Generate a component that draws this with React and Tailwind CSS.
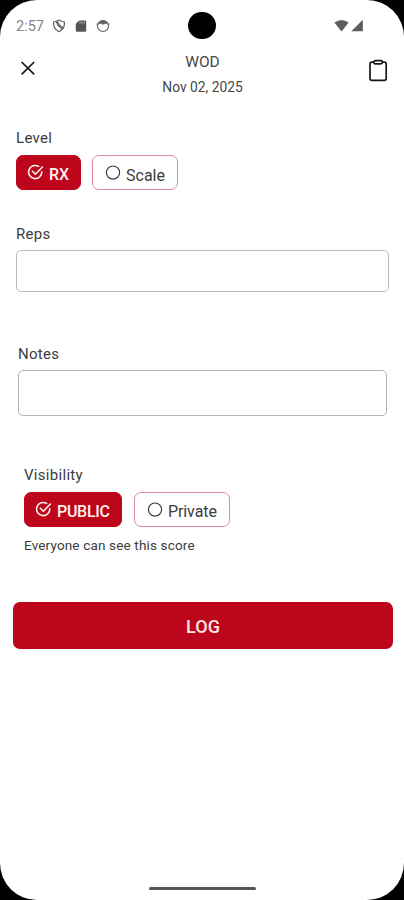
const CheckCircle = () => (
  <svg className="w-[17px] h-[17px] shrink-0" viewBox="0 0 17 17" fill="none" stroke="currentColor" strokeWidth="1.6" strokeLinecap="round" strokeLinejoin="round">
    <path d="M14.8 7.8 A6.6 6.6 0 1 1 11.6 2.4" />
    <path d="M5.4 7.2 L8.4 10.2 L15.4 3" />
  </svg>
);

const EmptyCircle = () => (
  <svg className="w-[17px] h-[17px] shrink-0" viewBox="0 0 17 17" fill="none" stroke="currentColor" strokeWidth="1.2">
    <circle cx="9" cy="8.6" r="6.6" />
  </svg>
);

const Choice = ({ label, active, className, textClass }) => (
  <button
    type="button"
    className={`flex h-[35px] items-start rounded-[7px] border pt-[8px] ${active ? 'border-[#bd051c] bg-[#bd051c] text-[#fff0ee]' : 'border-[#dc8f98] bg-white text-[#3c3c3c]'} ${className}`}
  >
    {active ? <CheckCircle /> : <EmptyCircle />}
    <span className={`whitespace-nowrap leading-5 ${textClass}`}>{label}</span>
  </button>
);

const StatusBar = () => (
  <div className="flex h-[50px] shrink-0 items-center text-[#666666]">
    <div className="flex w-[188px] items-center pl-[16px] pt-[2px]">
      <span className="w-[36px] pt-[1px] text-[14.5px] leading-5 text-[#858585]">2:57</span>
      <svg className="h-[14px] w-[14px]" viewBox="0 0 14 14" fill="none" stroke="currentColor" strokeWidth="1.2">
        <path d="M1.6 3 Q4.6 2.4 7 1 Q9.4 2.4 12.4 3 Q13.2 9.6 7 12.8 Q.8 9.6 1.6 3 Z" />
        <path d="M4.2 2.4 L6 6.4 L10.4 10.4 M5.2 2 L7.2 5.8 L11.4 9.2" />
      </svg>
      <svg className="ml-[9px] h-[14px] w-[12px]" viewBox="0 0 12 14">
        <path d="M4.2 1.4 H10.2 Q11.2 1.4 11.2 2.4 V11.8 Q11.2 12.8 10.2 12.8 H1.8 Q.8 12.8 .8 11.8 V4.8 Z" fill="#555555" />
        <path d="M5 2.8 V4.4 M7.1 2.8 V4.4 M9.2 2.8 V4.4" stroke="#c8c8c8" strokeWidth="1" />
      </svg>
      <svg className="ml-[9px] h-[14px] w-[14px]" viewBox="0 0 14 14">
        <circle cx="7" cy="7" r="5.5" fill="none" stroke="currentColor" strokeWidth="1.2" />
        <path d="M2 5 Q3.4 1.3 7 1.2 Q10.6 1.3 12 5 L9 4.8 L7 5.8 L5 4.8 Z" fill="currentColor" />
        <path d="M.4 5.2 H2.4 M11.6 5.2 H13.6" stroke="currentColor" />
      </svg>
    </div>
    <div className="h-[27px] w-[28px] rounded-full bg-black" />
    <div className="flex flex-1 items-center pl-[118px]">
      <svg className="h-[13px] w-[15px]" viewBox="0 0 15 13">
        <path d="M.4 3.6 Q7.5 -1.8 14.6 3.6 L7.5 12.4 Z" fill="#5c5c5c" />
      </svg>
      <svg className="ml-[2px] h-[13px] w-[12px]" viewBox="0 0 12 13">
        <path d="M.3 12.3 L11.8 .7 V12.3 Z" fill="#5c5c5c" />
      </svg>
    </div>
  </div>
);

const Header = () => (
  <header className="flex h-[77px] shrink-0 items-start pl-[20px] pr-[16px]">
    <button type="button" aria-label="Close" className="mt-[10px]">
      <svg className="h-[16px] w-[16px]" viewBox="0 0 16 16" fill="none" stroke="#181818" strokeWidth="1.7">
        <path d="M1.6 2 L14.2 14.4 M14.2 2 L1.6 14.4" />
      </svg>
    </button>
    <div className="flex flex-1 flex-col items-center pl-[1px] text-[#484848]">
      <h1 className="mt-[2px] text-[15.5px] leading-5">WOD</h1>
      <p className="mt-[5px] text-[13.8px] leading-5">Nov 02, 2025</p>
    </div>
    <button type="button" aria-label="Clipboard" className="mt-[9px]">
      <svg className="h-[23px] w-[20px]" viewBox="0 0 20 23" fill="none" stroke="#181818" strokeWidth="1.7" strokeLinejoin="round">
        <path d="M6 3.2 H4 Q2 3.2 2 5.2 V19.4 Q2 21.3 4 21.3 H16.2 Q18.2 21.3 18.2 19.4 V5.2 Q18.2 3.2 16.2 3.2 H14.2" />
        <rect x="5.8" y="1.7" width="8.6" height="3.2" rx="1.6" />
      </svg>
    </button>
  </header>
);

export default function App() {
  return (
    <div className="h-[900px] w-[404px] overflow-hidden bg-black font-['Roboto',sans-serif]">
      <div className="flex h-full flex-col rounded-[37px] bg-white text-[#3c3c3c]">
        <StatusBar />
        <Header />

        <section className="flex h-[97px] shrink-0 flex-col pl-[16px]">
          <h2 className="text-[15px] leading-[22px] tracking-[0.3px]">Level</h2>
          <div className="mt-[6px] flex gap-[11px]">
            <Choice label="RX" active className="w-[65px] pl-[10px]" textClass="mt-[1px] ml-[5px] text-[16px] font-medium" />
            <Choice label="Scale" className="w-[86px] pl-[11px]" textClass="mt-[2px] ml-[5px] text-[16px]" />
          </div>
        </section>

        <section className="flex h-[119px] shrink-0 flex-col pl-[16px] pr-[15px]">
          <label htmlFor="reps" className="text-[15px] leading-5 tracking-[0.3px]">Reps</label>
          <input id="reps" className="mt-[6px] h-[42px] w-full rounded-[5px] border border-[#bcbcbc] px-3 outline-none" />
        </section>

        <section className="flex h-[121px] shrink-0 flex-col pl-[18px] pr-[17px]">
          <label htmlFor="notes" className="mt-[1px] text-[15px] leading-5 tracking-[0.3px]">Notes</label>
          <input id="notes" className="mt-[6px] h-[46px] w-full rounded-[5px] border border-[#b4b4b4] px-3 outline-none" />
        </section>

        <section className="flex h-[138px] shrink-0 flex-col pl-[24px]">
          <h2 className="mt-[1px] text-[15px] leading-5 tracking-[0.3px]">Visibility</h2>
          <div className="mt-[7px] flex gap-[12px]">
            <Choice label="PUBLIC" active className="w-[98px] pl-[10px]" textClass="mt-[1px] ml-[5px] text-[16px] tracking-[-0.3px] font-medium" />
            <Choice label="Private" className="w-[96px] pl-[11px]" textClass="mt-[1px] ml-[5px] text-[16px] tracking-[-0.1px]" />
          </div>
          <p className="mt-[8px] text-[13.5px] leading-5 tracking-[0.16px]">Everyone can see this score</p>
        </section>

        <button type="button" className="ml-[13px] h-[47px] w-[380px] shrink-0 rounded-[7px] bg-[#bd051c] pt-[1px] text-[18px] font-medium text-[#ffe6e3]">
          LOG
        </button>

        <div className="mx-auto mb-[10px] mt-auto h-[3px] w-[107px] rounded-full bg-[#555555]" />
      </div>
    </div>
  );
}
